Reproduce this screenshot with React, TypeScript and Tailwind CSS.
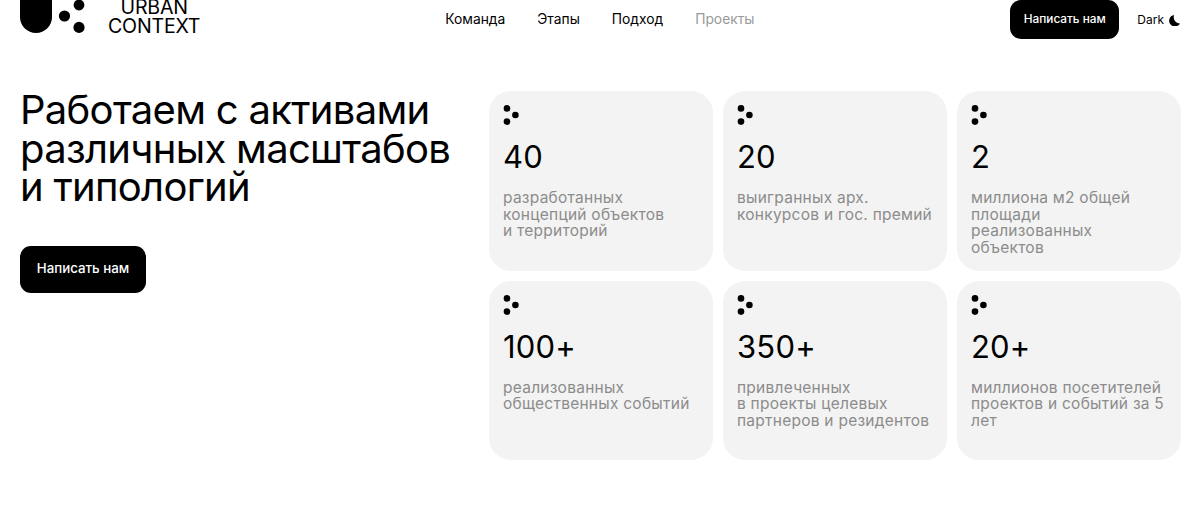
const cards = [
  { n: "40", lines: ["разработанных", "концепций объектов", "и территорий"] },
  { n: "20", lines: ["выигранных арх.", "конкурсов и гос. премий"] },
  { n: "2", lines: ["миллиона м2 общей", "площади", "реализованных", "объектов"] },
  { n: "100+", lines: ["реализованных", "общественных событий"] },
  { n: "350+", lines: ["привлеченных", "в проекты целевых", "партнеров и резидентов"] },
  { n: "20+", lines: ["миллионов посетителей", "проектов и событий за 5", "лет"] },
];

function Dots({ className }: { className: string }) {
  return (
    <svg viewBox="0 0 16 20" className={className} fill="#000">
      <circle cx="4" cy="3.4" r="3.3" />
      <circle cx="12.4" cy="10" r="3.3" />
      <circle cx="4" cy="16.6" r="3.3" />
    </svg>
  );
}

function Logo() {
  return (
    <div className="flex items-start h-[36px] overflow-hidden">
      <div className="w-[32px] h-[33px] bg-black rounded-b-[16px] mr-[5px]" />
      <svg viewBox="0 0 28 33" className="w-[28px] h-[33px] mt-0" fill="#000">
        <circle cx="7.5" cy="16" r="5.6" />
        <circle cx="22" cy="5" r="5.4" />
        <circle cx="22" cy="27.4" r="5.6" />
      </svg>
      <div className="ml-[23px] -mt-[2px] text-center text-[19.6px] leading-[18.5px] text-black tracking-[-0.2px]">
        <div>URBAN</div>
        <div>CONTEXT</div>
      </div>
    </div>
  );
}

export default function App() {
  return (
    <div className="w-[1200px] h-[529px] bg-white overflow-hidden font-['Inter',sans-serif] text-black">
      <header className="flex items-start h-[39px] pl-5">
        <Logo />
        <nav className="ml-[245px] mt-[11px] flex gap-8 text-[13.8px] leading-4 text-black">
          <span>Команда</span>
          <span>Этапы</span>
          <span>Подход</span>
          <span className="text-[#999999]">Проекты</span>
        </nav>
        <div className="ml-auto flex items-start">
          <div className="w-[109px] h-[39px] bg-black text-white rounded-[11px] text-[11.8px] font-medium flex items-center justify-center">
            Написать нам
          </div>
          <div className="ml-[18px] mr-[20px] mt-3 flex items-center gap-[5px] text-[12px] leading-4">
            <span>Dark</span>
            <svg viewBox="0 0 12 12" className="w-[11px] h-[11px]" fill="#000">
              <path d="M5.6 0A6.3 6.3 0 1 0 12 9.2 6.8 6.8 0 0 1 5.6 0z" />
            </svg>
          </div>
        </div>
      </header>
      <main className="flex items-start pl-5 pt-[52px]">
        <div className="w-[468.5px] shrink-0">
          <h1 className="text-[40px] leading-[38.5px] font-normal tracking-[-0.7px]">
            Работаем с активами
            <br />
            различных масштабов
            <br />
            и типологий
          </h1>
          <div className="mt-[39px] w-[126px] h-[47px] bg-black text-white rounded-[11px] text-[13.3px] font-medium flex items-center justify-center">
            Написать нам
          </div>
        </div>
        <div className="grid grid-cols-[224px_224px_224.5px] auto-rows-[179.5px] gap-[10px]">
          {cards.map((c) => (
            <div key={c.n} className="bg-[#f3f3f3] rounded-[22px] pl-[14.5px] pr-[15px] pt-[14px]">
              <Dots className="w-[16px] h-[20px] block" />
              <div className="mt-[13px] text-[31px] leading-[38px] tracking-[0.2px]">{c.n}</div>
              <div className="mt-[14px] text-[15.5px] tracking-[0.25px] leading-[16.7px] text-[#8c8c8c] whitespace-nowrap">
                {c.lines.map((l) => (
                  <div key={l}>{l}</div>
                ))}
              </div>
            </div>
          ))}
        </div>
      </main>
    </div>
  );
}
